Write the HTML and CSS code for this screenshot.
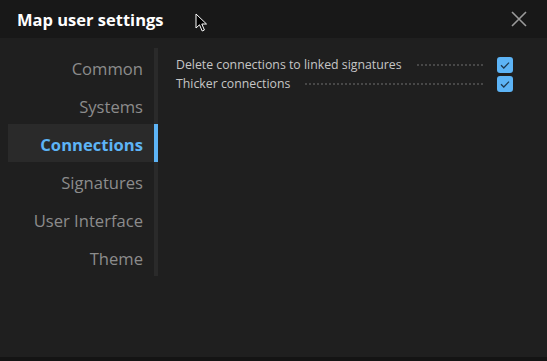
FILE: index.html
```html
<!DOCTYPE html>
<html lang="en">
<head>
    <meta charset="UTF-8">
    <meta name="viewport" content="width=device-width, initial-scale=1.0">
    <title>Map user settings</title>
    <link rel="stylesheet" href="styles.css">
</head>
<body>
    <div class="dialog">
        <div class="dialog-header">
            <h1 class="dialog-title">Map user settings</h1>
            <button class="close-button" aria-label="Close">
                <svg width="16" height="16" viewBox="0 0 16 16">
                    <path d="M1 1 L15 15 M15 1 L1 15" stroke="#9a9a9a" stroke-width="1.6" fill="none"/>
                </svg>
            </button>
        </div>

        <div class="dialog-body">
            <ul class="nav">
                <li class="nav-item">Common</li>
                <li class="nav-item">Systems</li>
                <li class="nav-item active">Connections</li>
                <li class="nav-item">Signatures</li>
                <li class="nav-item">User Interface</li>
                <li class="nav-item">Theme</li>
            </ul>

            <div class="settings">
                <label class="setting-row">
                    <span class="setting-label">Delete connections to linked signatures</span>
                    <span class="setting-leader"></span>
                    <span class="checkbox checked">
                        <svg width="16" height="16" viewBox="0 0 16 16">
                            <path d="M4 8.2 L6.8 11 L12 5.6" stroke="#1e3a52" stroke-width="1.3" fill="none"/>
                        </svg>
                    </span>
                </label>
                <label class="setting-row">
                    <span class="setting-label">Thicker connections</span>
                    <span class="setting-leader"></span>
                    <span class="checkbox checked">
                        <svg width="16" height="16" viewBox="0 0 16 16">
                            <path d="M4 8.2 L6.8 11 L12 5.6" stroke="#1e3a52" stroke-width="1.3" fill="none"/>
                        </svg>
                    </span>
                </label>
            </div>
        </div>

        <div class="dialog-footer"></div>
    </div>

    <!-- mouse pointer captured in the screenshot -->
    <svg class="pointer" width="14" height="20" viewBox="0 0 14 20">
        <path d="M1 1 L1 15 L4.5 11.8 L7.2 18 L9.4 17 L6.8 11 L11.5 11 Z" fill="#000" stroke="#fff" stroke-width="1"/>
    </svg>
</body>
</html>
```

FILE: styles.css
```css
:root {
    --header-bg: #181818;
    --body-bg: #1f1f1f;
    --nav-track: #2a2a2a;
    --nav-active-bg: #2a2a2a;
    --accent: #5db4f6;
    --text-muted: #8c8c8c;
    --text-color: #c6c6c6;
}

* {
    margin: 0;
    padding: 0;
    box-sizing: border-box;
}

body {
    font-family: 'Open Sans', 'Noto Sans', sans-serif;
    background-color: var(--body-bg);
    color: var(--text-color);
    height: 100vh;
    overflow: hidden;
}

.dialog {
    display: flex;
    flex-direction: column;
    height: 100vh;
}

.dialog-header {
    height: 38px;
    background-color: var(--header-bg);
    display: flex;
    align-items: center;
    justify-content: space-between;
    padding: 0 20px 0 17px;
}

.dialog-title {
    font-size: 16.5px;
    font-weight: 700;
    color: #ffffff;
}

.close-button {
    background: none;
    border: none;
    width: 16px;
    height: 16px;
    display: flex;
    cursor: pointer;
}

.dialog-body {
    flex: 1;
    display: flex;
    padding: 10px 34px 0 8px;
}

.nav {
    list-style: none;
    width: 150px;
    align-self: flex-start;
    border-right: 4px solid var(--nav-track);
}

.nav-item {
    height: 38px;
    display: flex;
    align-items: center;
    justify-content: flex-end;
    padding: 2px 11px 0 0;
    font-size: 16.6px;
    color: var(--text-muted);
    cursor: pointer;
    position: relative;
}

.nav-item.active {
    background-color: var(--nav-active-bg);
    color: var(--accent);
    font-weight: 700;
}

.nav-item.active::after {
    content: "";
    position: absolute;
    top: 0;
    right: -4px;
    width: 4px;
    height: 100%;
    background-color: var(--accent);
}

.settings {
    flex: 1;
    display: flex;
    flex-direction: column;
    padding: 7px 0 0 18px;
}

.setting-row {
    display: flex;
    align-items: center;
    height: 19px;
    font-size: 12.3px;
    cursor: pointer;
}

.setting-label {
    white-space: nowrap;
}

.setting-leader {
    flex: 1;
    margin: 0 14px 0 15px;
    border-bottom: 2px dotted #474747;
    height: 0;
}

.checkbox {
    width: 16px;
    height: 16px;
    border-radius: 3px;
    background-color: var(--accent);
    display: flex;
}

.dialog-footer {
    height: 4px;
    background-color: #141414;
}

.pointer {
    position: absolute;
    left: 195px;
    top: 13px;
    pointer-events: none;
}
```
